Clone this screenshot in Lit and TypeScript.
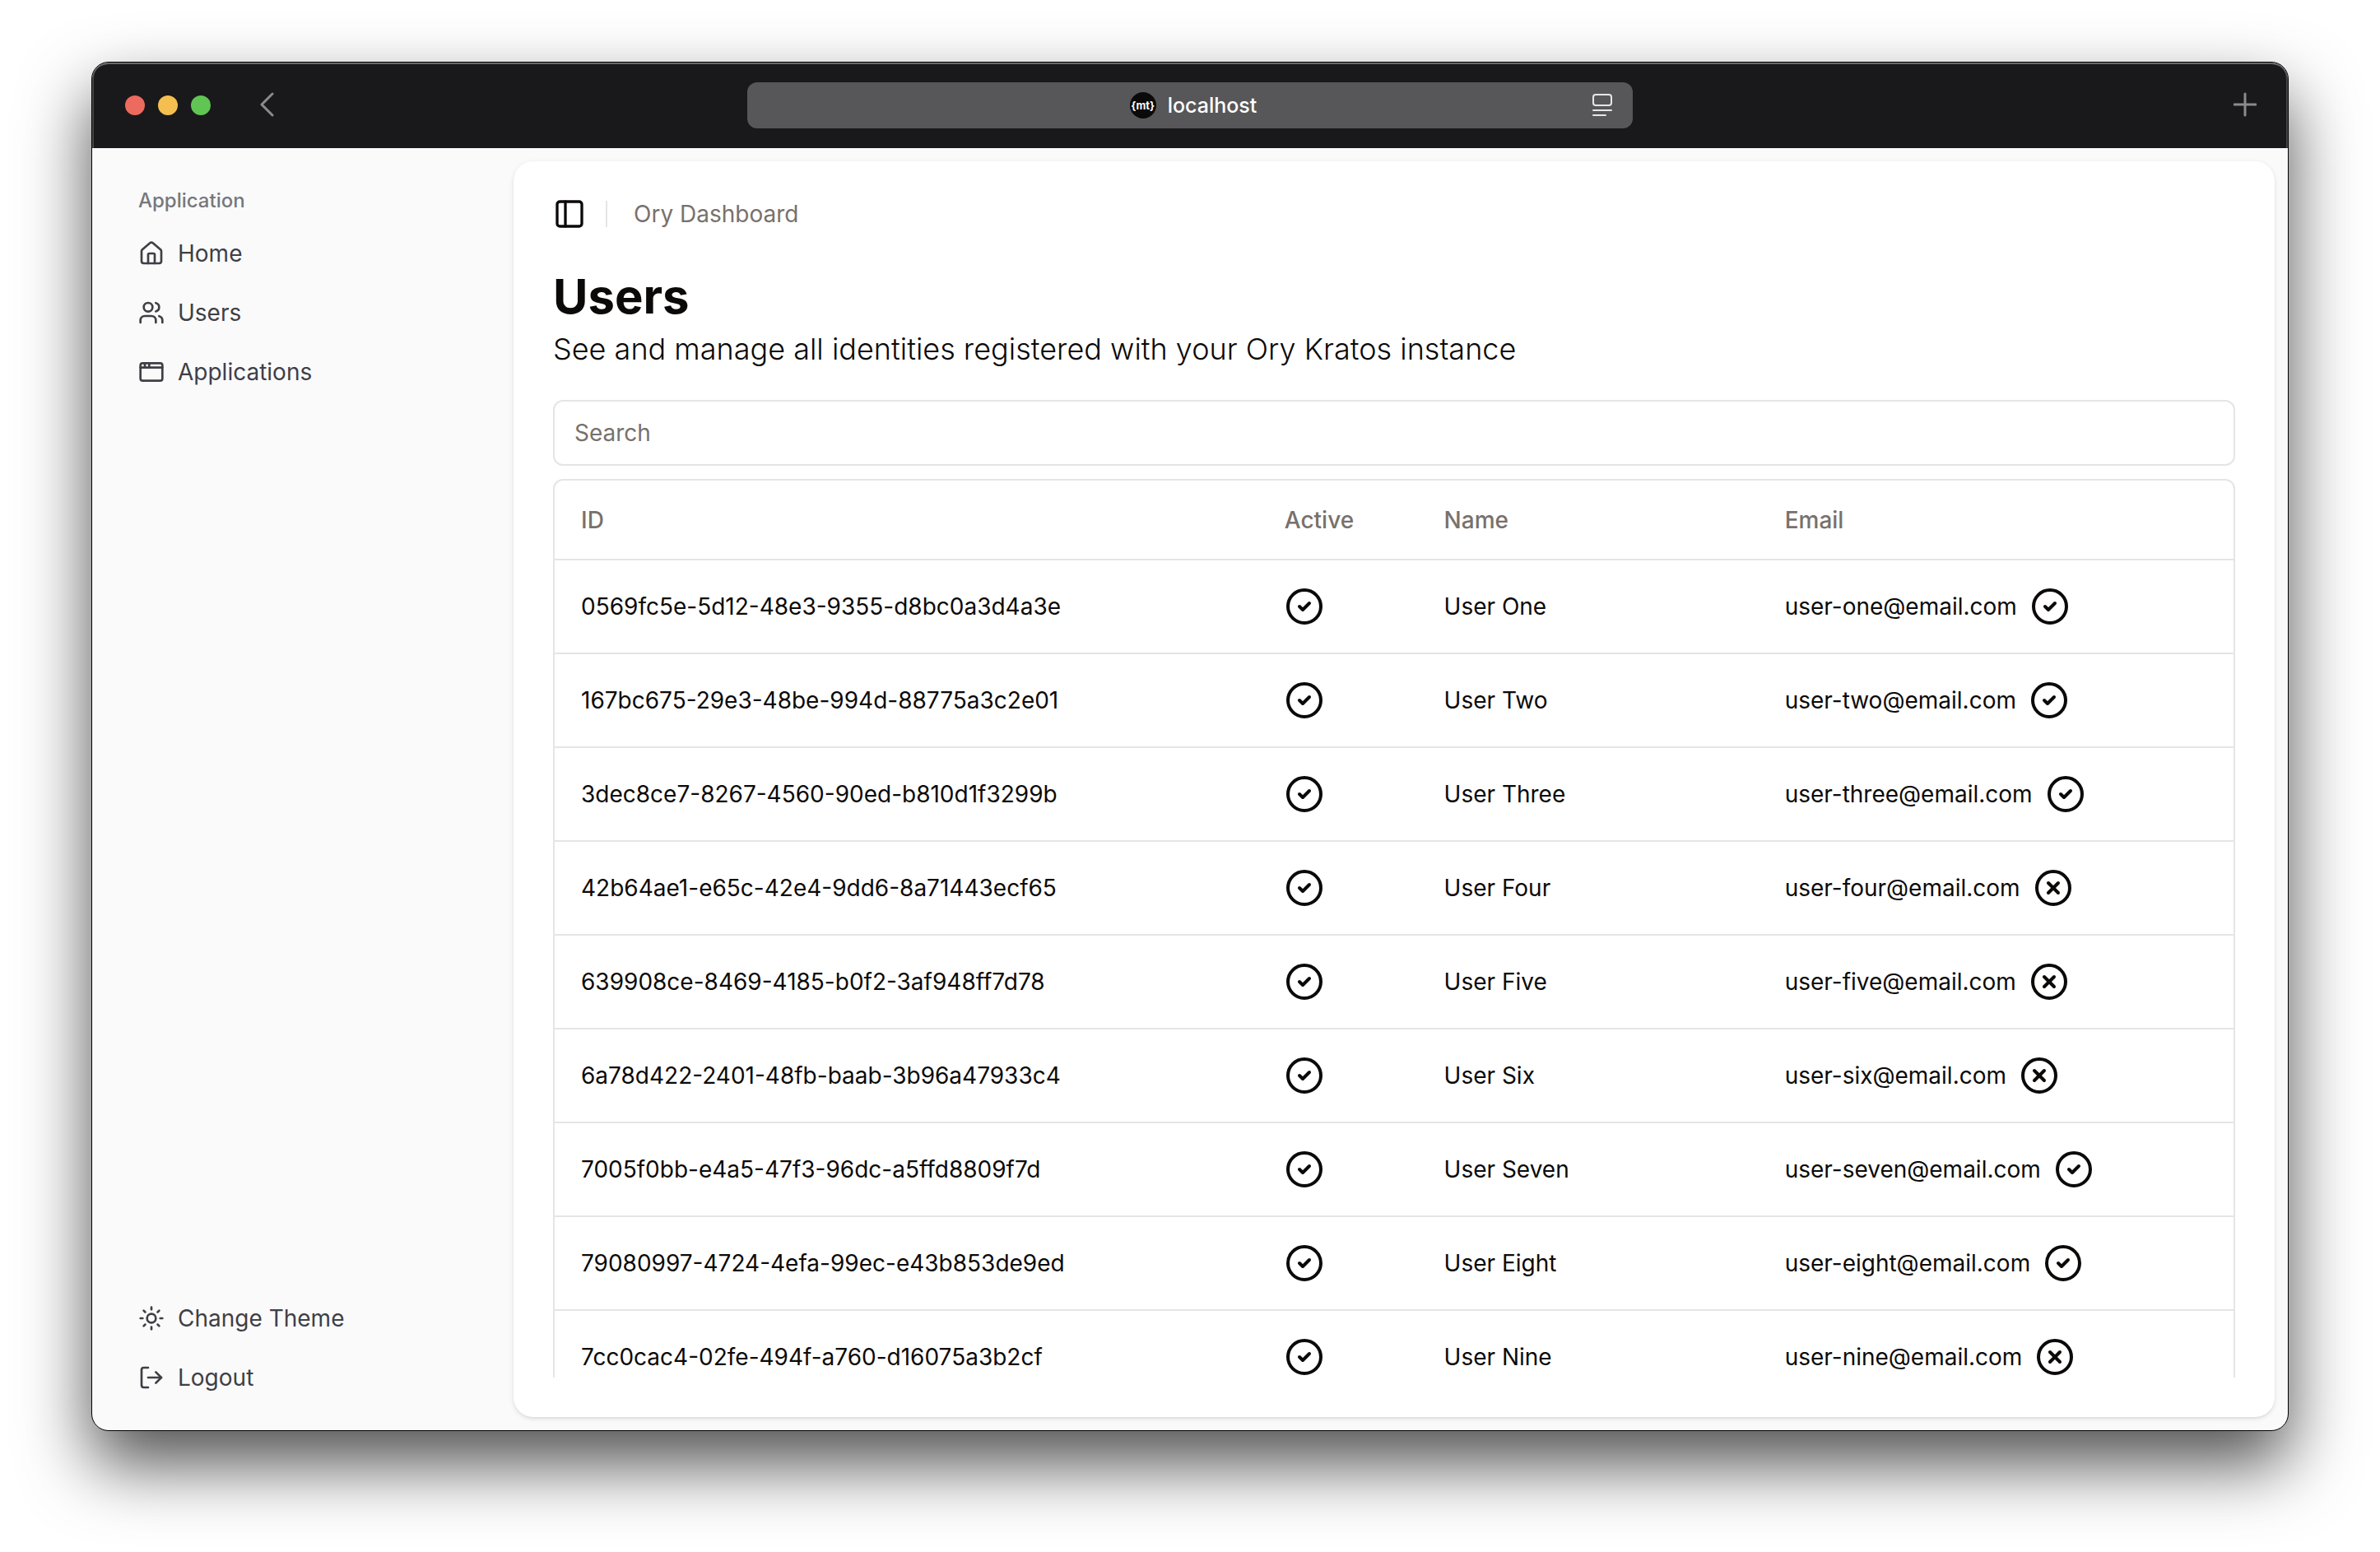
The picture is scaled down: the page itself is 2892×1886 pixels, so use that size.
import { LitElement, html, css, svg } from "lit";
import { customElement } from "lit/decorators.js";

interface Identity {
  id: string;
  name: string;
  email: string;
  verified: boolean;
}

const identities: Identity[] = [
  { id: "0569fc5e-5d12-48e3-9355-d8bc0a3d4a3e", name: "User One", email: "user-one@email.com", verified: true },
  { id: "167bc675-29e3-48be-994d-88775a3c2e01", name: "User Two", email: "user-two@email.com", verified: true },
  { id: "3dec8ce7-8267-4560-90ed-b810d1f3299b", name: "User Three", email: "user-three@email.com", verified: true },
  { id: "42b64ae1-e65c-42e4-9dd6-8a71443ecf65", name: "User Four", email: "user-four@email.com", verified: false },
  { id: "639908ce-8469-4185-b0f2-3af948ff7d78", name: "User Five", email: "user-five@email.com", verified: false },
  { id: "6a78d422-2401-48fb-baab-3b96a47933c4", name: "User Six", email: "user-six@email.com", verified: false },
  { id: "7005f0bb-e4a5-47f3-96dc-a5ffd8809f7d", name: "User Seven", email: "user-seven@email.com", verified: true },
  { id: "79080997-4724-4efa-99ec-e43b853de9ed", name: "User Eight", email: "user-eight@email.com", verified: true },
  { id: "7cc0cac4-02fe-494f-a760-d16075a3b2cf", name: "User Nine", email: "user-nine@email.com", verified: false },
];

const shapes = {
  home: svg`<path d="M15 21v-8a1 1 0 0 0-1-1h-4a1 1 0 0 0-1 1v8"/><path d="M3 10a2 2 0 0 1 .709-1.528l7-5.999a2 2 0 0 1 2.582 0l7 5.999A2 2 0 0 1 21 10v9a2 2 0 0 1-2 2H5a2 2 0 0 1-2-2z"/>`,
  users: svg`<path d="M16 21v-2a4 4 0 0 0-4-4H6a4 4 0 0 0-4 4v2"/><circle cx="9" cy="7" r="4"/><path d="M22 21v-2a4 4 0 0 0-3-3.87"/><path d="M16 3.13a4 4 0 0 1 0 7.75"/>`,
  app: svg`<rect x="2" y="4" width="20" height="16" rx="2"/><path d="M10 4v4"/><path d="M2 8h20"/><path d="M6 4v4"/>`,
  sun: svg`<circle cx="12" cy="12" r="4"/><path d="M12 2v2"/><path d="M12 20v2"/><path d="m4.93 4.93 1.41 1.41"/><path d="m17.66 17.66 1.41 1.41"/><path d="M2 12h2"/><path d="M20 12h2"/><path d="m6.34 17.66-1.41 1.41"/><path d="m19.07 4.93-1.41 1.41"/>`,
  logout: svg`<path d="m16 17 5-5-5-5"/><path d="M21 12H9"/><path d="M9 21H5a2 2 0 0 1-2-2V5a2 2 0 0 1 2-2h4"/>`,
  panel: svg`<rect x="3" y="3" width="18" height="18" rx="2"/><path d="M9 3v18"/>`,
  check: svg`<circle cx="12" cy="12" r="10"/><path d="m9 12 2 2 4-4"/>`,
  cross: svg`<circle cx="12" cy="12" r="10"/><path d="m15 9-6 6"/><path d="m9 9 6 6"/>`,
};

const icon = (name: keyof typeof shapes, size: string) => html`<svg
  class="icon ${size}"
  viewBox="0 0 24 24"
  aria-hidden="true"
>${shapes[name]}</svg>`;

@customElement("app-root")
export class AppRoot extends LitElement {
  static styles = css`
    :host {
      display: block;
      box-sizing: border-box;
      height: 100vh;
      padding: 75px 111px 147px;
      overflow: hidden;
      background: #fff;
      color: #0c0a09;
      font: 400 28px/40px Inter, "Liberation Sans", sans-serif;
    }
    * { box-sizing: border-box; }
    button, input { font: inherit; color: inherit; margin: 0; }
    button { padding: 0; border: 0; background: none; cursor: pointer; }
    .icon {
      display: block;
      flex: none;
      fill: none;
      stroke: currentColor;
      stroke-width: 2;
      stroke-linecap: round;
      stroke-linejoin: round;
    }
    .small { width: 32px; height: 32px; }
    .medium { width: 40px; height: 40px; }
    .large { width: 48px; height: 48px; }

    .window {
      display: flex;
      flex-direction: column;
      height: 100%;
      border: 1px solid #000;
      border-radius: 21px;
      overflow: hidden;
      background: #fafafa;
      box-shadow: 0 40px 84px rgba(0, 0, 0, 0.69);
    }
    .titlebar {
      flex: none;
      display: grid;
      grid-template-columns: 1fr 1076px 1fr;
      align-items: center;
      height: 104px;
      padding: 0 38px;
      border-radius: 20px 20px 0 0;
      background: #19191b;
      box-shadow: inset 0 2px #6a6a6c, inset 2px 0 #454547, inset -2px 0 #454547;
    }
    .controls { display: flex; align-items: center; gap: 16px; padding-left: 2px; }
    .light { width: 24px; height: 24px; border-radius: 50%; }
    .close { background: #ed6a5e; }
    .minimise { background: #f5bf4f; }
    .zoom { background: #61c554; }
    .back { margin-left: 40px; }
    .chrome { display: block; fill: none; stroke: #8b8b8d; stroke-width: 3; stroke-linecap: round; stroke-linejoin: round; }
    .new-tab { justify-self: end; }
    .address {
      display: grid;
      grid-template-columns: 1fr auto 1fr;
      align-items: center;
      height: 56px;
      padding: 0 24px;
      border-radius: 12px;
      background: #575759;
      color: #fff;
    }
    .site {
      grid-column: 2;
      display: flex;
      align-items: center;
      gap: 14px;
      padding-left: 8px;
      font-size: 25px;
      font-weight: 500;
    }
    .favicon {
      display: grid;
      place-items: center;
      width: 32px;
      height: 32px;
      border-radius: 50%;
      background: #0a0a0a;
      font-size: 13px;
      line-height: 16px;
      font-weight: 700;
    }
    .reader { justify-self: end; }
    .reader .chrome { stroke: #e6e6e7; stroke-width: 2; }

    .body { flex: 1; min-height: 0; display: flex; }
    .sidebar {
      flex: none;
      display: flex;
      flex-direction: column;
      justify-content: space-between;
      width: 512px;
      padding: 32px 56px;
      color: #3f3f46;
    }
    .group { margin: 0; font-size: 24px; line-height: 64px; font-weight: 500; color: #77777c; }
    .menu { display: flex; flex-direction: column; gap: 8px; list-style: none; margin: 0; padding: 0; }
    .item {
      display: flex;
      align-items: center;
      gap: 16px;
      width: 100%;
      height: 64px;
      color: inherit;
      text-decoration: none;
    }

    .card {
      flex: 1;
      min-width: 0;
      display: flex;
      flex-direction: column;
      margin: 16px 16px 16px 0;
      padding: 40px 48px 48px;
      border-radius: 24px;
      background: #fff;
      box-shadow: 0 2px 6px rgba(0, 0, 0, 0.1), 0 2px 4px -2px rgba(0, 0, 0, 0.1);
    }
    .topbar { display: flex; align-items: center; gap: 24px; height: 48px; }
    .divider { width: 2px; height: 32px; background: #e5e5e5; }
    .crumb { padding-left: 8px; color: #78716c; }
    h1 { margin: 40px 0 0; font-size: 58px; line-height: 72px; font-weight: 700; }
    .lead { margin: 0; font-size: 36px; line-height: 56px; font-weight: 300; }
    .search {
      flex: none;
      width: 100%;
      height: 80px;
      margin: 34px 0 16px;
      padding: 0 24px;
      border: 2px solid #e5e5e5;
      border-radius: 12px;
      background: #fff;
      outline: none;
    }
    .search::placeholder { color: #78716c; opacity: 1; }
    .scroller { flex: 1; min-height: 0; overflow: hidden; }
    .frame { border: 2px solid #e5e5e5; border-radius: 12px; }
    table { width: 100%; table-layout: fixed; border-collapse: separate; border-spacing: 0; }
    th, td { padding: 0 32px; text-align: left; border-bottom: 2px solid #e5e5e5; }
    th { height: 97px; font-weight: 500; color: #78716c; }
    td { height: 114px; }
    .col-id { width: 41.9%; }
    .col-active { width: 9.5%; }
    .col-name { width: 20.3%; }
    .email { display: flex; align-items: center; gap: 16px; }
  `;

  private row(user: Identity) {
    return html`<tr>
      <td>${user.id}</td>
      <td>${icon("check", "large")}</td>
      <td>${user.name}</td>
      <td><div class="email">${user.email}${icon(user.verified ? "check" : "cross", "large")}</div></td>
    </tr>`;
  }

  render() {
    return html`
      <div class="window">
        <header class="titlebar">
          <div class="controls">
            <span class="light close"></span>
            <span class="light minimise"></span>
            <span class="light zoom"></span>
            <button class="back" aria-label="Back">
              <svg class="chrome" width="24" height="32" viewBox="0 0 24 32"><path d="M19 2 6 15l13 13"/></svg>
            </button>
          </div>
          <div class="address">
            <div class="site"><span class="favicon">{mt}</span><span>localhost</span></div>
            <button class="reader" aria-label="Reader">
              <svg class="chrome" width="26" height="30" viewBox="0 0 26 30"><rect x="2" y="2" width="22" height="13" rx="3"/><path d="M2 21h22M2 27h15"/></svg>
            </button>
          </div>
          <button class="new-tab" aria-label="New tab">
            <svg class="chrome" width="28" height="32" viewBox="0 0 28 32"><path d="M14 2v26M1 15h26"/></svg>
          </button>
        </header>
        <div class="body">
          <aside class="sidebar">
            <nav aria-labelledby="group-label">
              <p class="group" id="group-label">Application</p>
              <ul class="menu">
                <li><a class="item" href="#home">${icon("home", "small")}Home</a></li>
                <li><a class="item" href="#users">${icon("users", "small")}Users</a></li>
                <li><a class="item" href="#applications">${icon("app", "small")}Applications</a></li>
              </ul>
            </nav>
            <ul class="menu">
              <li><button class="item">${icon("sun", "small")}Change Theme</button></li>
              <li><button class="item">${icon("logout", "small")}Logout</button></li>
            </ul>
          </aside>
          <main class="card">
            <div class="topbar">
              <button aria-label="Toggle sidebar">${icon("panel", "medium")}</button>
              <span class="divider"></span>
              <span class="crumb">Ory Dashboard</span>
            </div>
            <h1>Users</h1>
            <p class="lead">See and manage all identities registered with your Ory Kratos instance</p>
            <input class="search" type="search" placeholder="Search" aria-label="Search" />
            <div class="scroller">
              <div class="frame">
                <table>
                  <thead>
                    <tr>
                      <th class="col-id">ID</th>
                      <th class="col-active">Active</th>
                      <th class="col-name">Name</th>
                      <th>Email</th>
                    </tr>
                  </thead>
                  <tbody>${identities.map((user) => this.row(user))}</tbody>
                </table>
              </div>
            </div>
          </main>
        </div>
      </div>
    `;
  }
}
